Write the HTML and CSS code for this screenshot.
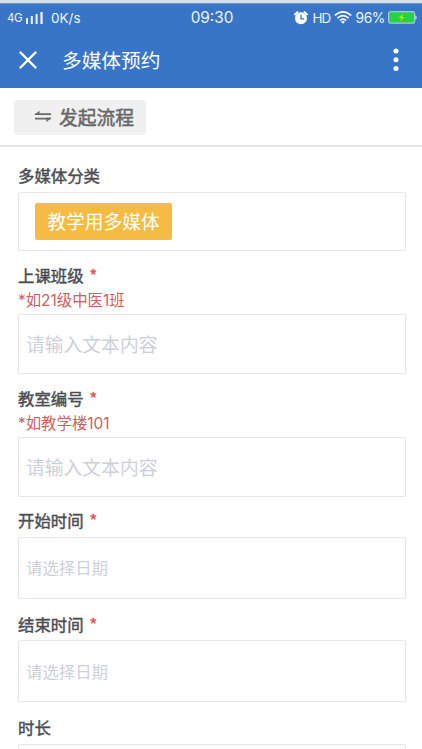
FILE: index.html
```html
<!DOCTYPE html>
<html lang="zh-CN">
<head>
<meta charset="utf-8">
<title>多媒体预约</title>
<link rel="stylesheet" href="styles.css">
</head>
<body>
<header class="header">
  <div class="status">
    <div class="status-left">
      <span class="net">4G</span>
      <svg class="signal" width="18" height="13" viewBox="0 0 18 13" fill="#e9f1fb"><rect x="0" y="7" width="2" height="6"/><rect x="4.8" y="5" width="2" height="8"/><rect x="9.6" y="3" width="2" height="10"/><rect x="14.4" y="1" width="2.3" height="12"/></svg>
      <span class="speed">0K/s</span>
    </div>
    <span class="clock">09:30</span>
    <div class="status-right">
      <svg class="alarm" width="14" height="14" viewBox="0 0 14 14"><circle cx="7" cy="7.3" r="6" fill="#fff"/><path d="M.9 3.5 3.6 1M13.1 3.5 10.4 1" stroke="#fff" stroke-width="1.8" stroke-linecap="round"/><path d="M7 3.8v4h3" fill="none" stroke="#3875c6" stroke-width="1.3"/></svg>
      <span class="hd">HD</span>
      <svg class="wifi" width="18" height="13" viewBox="0 0 18 13" fill="none" stroke="#fff" stroke-width="1.6"><path d="M.8 4.5Q9-2.7 17.2 4.5M3.3 7.1Q9 2.2 14.7 7.1M5.8 9.5Q9 6.8 12.2 9.5"/><path d="M7 10.8Q9 9.4 11 10.8L9 12.8Z" fill="#fff" stroke="none"/></svg>
      <span class="percent">96%</span>
      <svg class="battery" width="29" height="13" viewBox="0 0 29 13"><rect x=".6" y=".6" width="26" height="11.6" rx="2" fill="#27d344" stroke="#a8c8d8" stroke-width="1.2"/><path d="M27.3 4.2q1.3.5 1.3 2.2t-1.3 2.2z" fill="#dce8f5"/><path d="M15.2 2.7 10.8 7h2.8l-1.8 3.4L16.6 6h-2.8z" fill="#f5cf18"/></svg>
    </div>
  </div>
  <div class="navbar">
    <svg class="close" width="18" height="18" viewBox="0 0 18 18" stroke="#fff" stroke-width="2.4" stroke-linecap="round"><path d="M1.5 1.5l15 15M16.5 1.5l-15 15"/></svg>
    <h1 class="title">多媒体预约</h1>
    <svg class="more" width="6" height="24" viewBox="0 0 6 24" fill="#fff"><circle cx="3" cy="3" r="2.5"/><circle cx="3" cy="11.8" r="2.5"/><circle cx="3" cy="20.6" r="2.5"/></svg>
  </div>
</header>
<div class="toolbar">
  <button class="start"><svg width="18" height="13" viewBox="0 0 18 13" fill="none" stroke="#686868" stroke-width="1.8"><path d="M17 4.1H1.5M1 8.7H16.5"/><path d="M.2 5 5.5.8V5zM17.8 7.8 12.5 12V7.8z" fill="#686868" stroke="none"/></svg><span>发起流程</span></button>
</div>
<main class="form">
  <section class="field category">
    <div class="label">多媒体分类</div>
    <div class="box"><span class="tag">教学用多媒体</span></div>
  </section>
  <section class="field text">
    <div class="label">上课班级<span class="required">*</span></div>
    <div class="hint">*如21级中医1班</div>
    <div class="box">请输入文本内容</div>
  </section>
  <section class="field text">
    <div class="label">教室编号<span class="required">*</span></div>
    <div class="hint">*如教学楼101</div>
    <div class="box">请输入文本内容</div>
  </section>
  <section class="field date">
    <div class="label">开始时间<span class="required">*</span></div>
    <div class="box">请选择日期</div>
  </section>
  <section class="field date">
    <div class="label">结束时间<span class="required">*</span></div>
    <div class="box">请选择日期</div>
  </section>
  <section class="field date">
    <div class="label">时长</div>
    <div class="box"></div>
  </section>
</main>
</body>
</html>
```

FILE: styles.css
```css
* { box-sizing: border-box; }
html, body { height: 100%; }
body {
  margin: 0;
  height: 749px;
  overflow: hidden;
  display: flex;
  flex-direction: column;
  background: #fff;
  font-family: "Noto Sans CJK SC", sans-serif;
}
svg { display: block; flex: none; }
.header {
  flex: none;
  height: 88px;
  background: #3875c6;
  border-top: 3px solid #d3e0e8;
  box-shadow: inset 0 1px #6d98cf;
  color: #fff;
}
.status {
  height: 29px;
  display: grid;
  grid-template-columns: 1fr auto 1fr;
  align-items: center;
  font-family: Inter, sans-serif;
  color: #eef4fc;
}
.status-left, .status-right { display: flex; align-items: center; }
.status-left { padding-left: 7px; }
.status-right { justify-content: flex-end; padding-right: 5px; }
.net { font-size: 11.5px; width: 19px; letter-spacing: -0.5px; }
.speed { font-size: 13.5px; margin-left: 7px; }
.clock { font-size: 15.3px; margin-left: 2px; }
.alarm { margin-right: 5px; }
.hd { font-size: 13.5px; letter-spacing: -1.1px; width: 18px; }
.wifi { margin-left: 3px; }
.percent { font-size: 13.8px; letter-spacing: -0.4px; margin: 0 3px 0 4px; }
.navbar {
  height: 56px;
  display: flex;
  align-items: center;
  padding: 0 23px 0 19px;
}
.title { margin: 0 0 0 25px; font-size: 19.7px; font-weight: 400; line-height: 28px; }
.more { margin-left: auto; }
.toolbar {
  flex: none;
  height: 59px;
  padding: 12px 14px 0;
  border-bottom: 2px solid #e6e6e6;
}
.start {
  width: 132px;
  height: 35px;
  display: flex;
  align-items: center;
  padding: 0 0 2px 20px;
  gap: 7px;
  border: 0;
  border-radius: 4px;
  background: #f0f0f0;
  color: #686868;
  font: 400 18.8px/28px "Noto Sans CJK SC", sans-serif;
  -webkit-text-stroke: 0.5px;
}
.form {
  flex: 1;
  min-height: 0;
  overflow: hidden;
  padding: 16px 16px 0 18px;
}
.field { margin-bottom: 12px; }
.label {
  height: 24px;
  line-height: 24px;
  font-size: 16.4px;
  color: #4b4d53;
  -webkit-text-stroke: 0.45px;
}
.required { margin-left: 6px; color: #e94e5d; }
.hint {
  height: 27px;
  padding-top: 1px;
  line-height: 26px;
  font-family: Inter, "Noto Sans CJK SC", sans-serif;
  font-size: 15.4px;
  color: #d0605e;
}
.box {
  height: 60px;
  display: flex;
  align-items: center;
  padding: 0 7px;
  border: 1px solid #e5e6ec;
  border-radius: 2px;
  color: #cdd0d9;
  font-size: 18.8px;
}
.category .box { height: 59px; margin-top: 5px; padding-left: 16px; }
.text { margin-bottom: 11.5px; }
.text .box { padding-bottom: 1px; }
.date .box { height: 62px; margin-top: 4.5px; font-size: 16.4px; padding-bottom: 1px; }
.date { margin-bottom: 13px; }
.tag {
  width: 137px;
  height: 37px;
  line-height: 36px;
  border-radius: 2px;
  background: #f5bb43;
  color: #fff;
  text-align: center;
}
```
